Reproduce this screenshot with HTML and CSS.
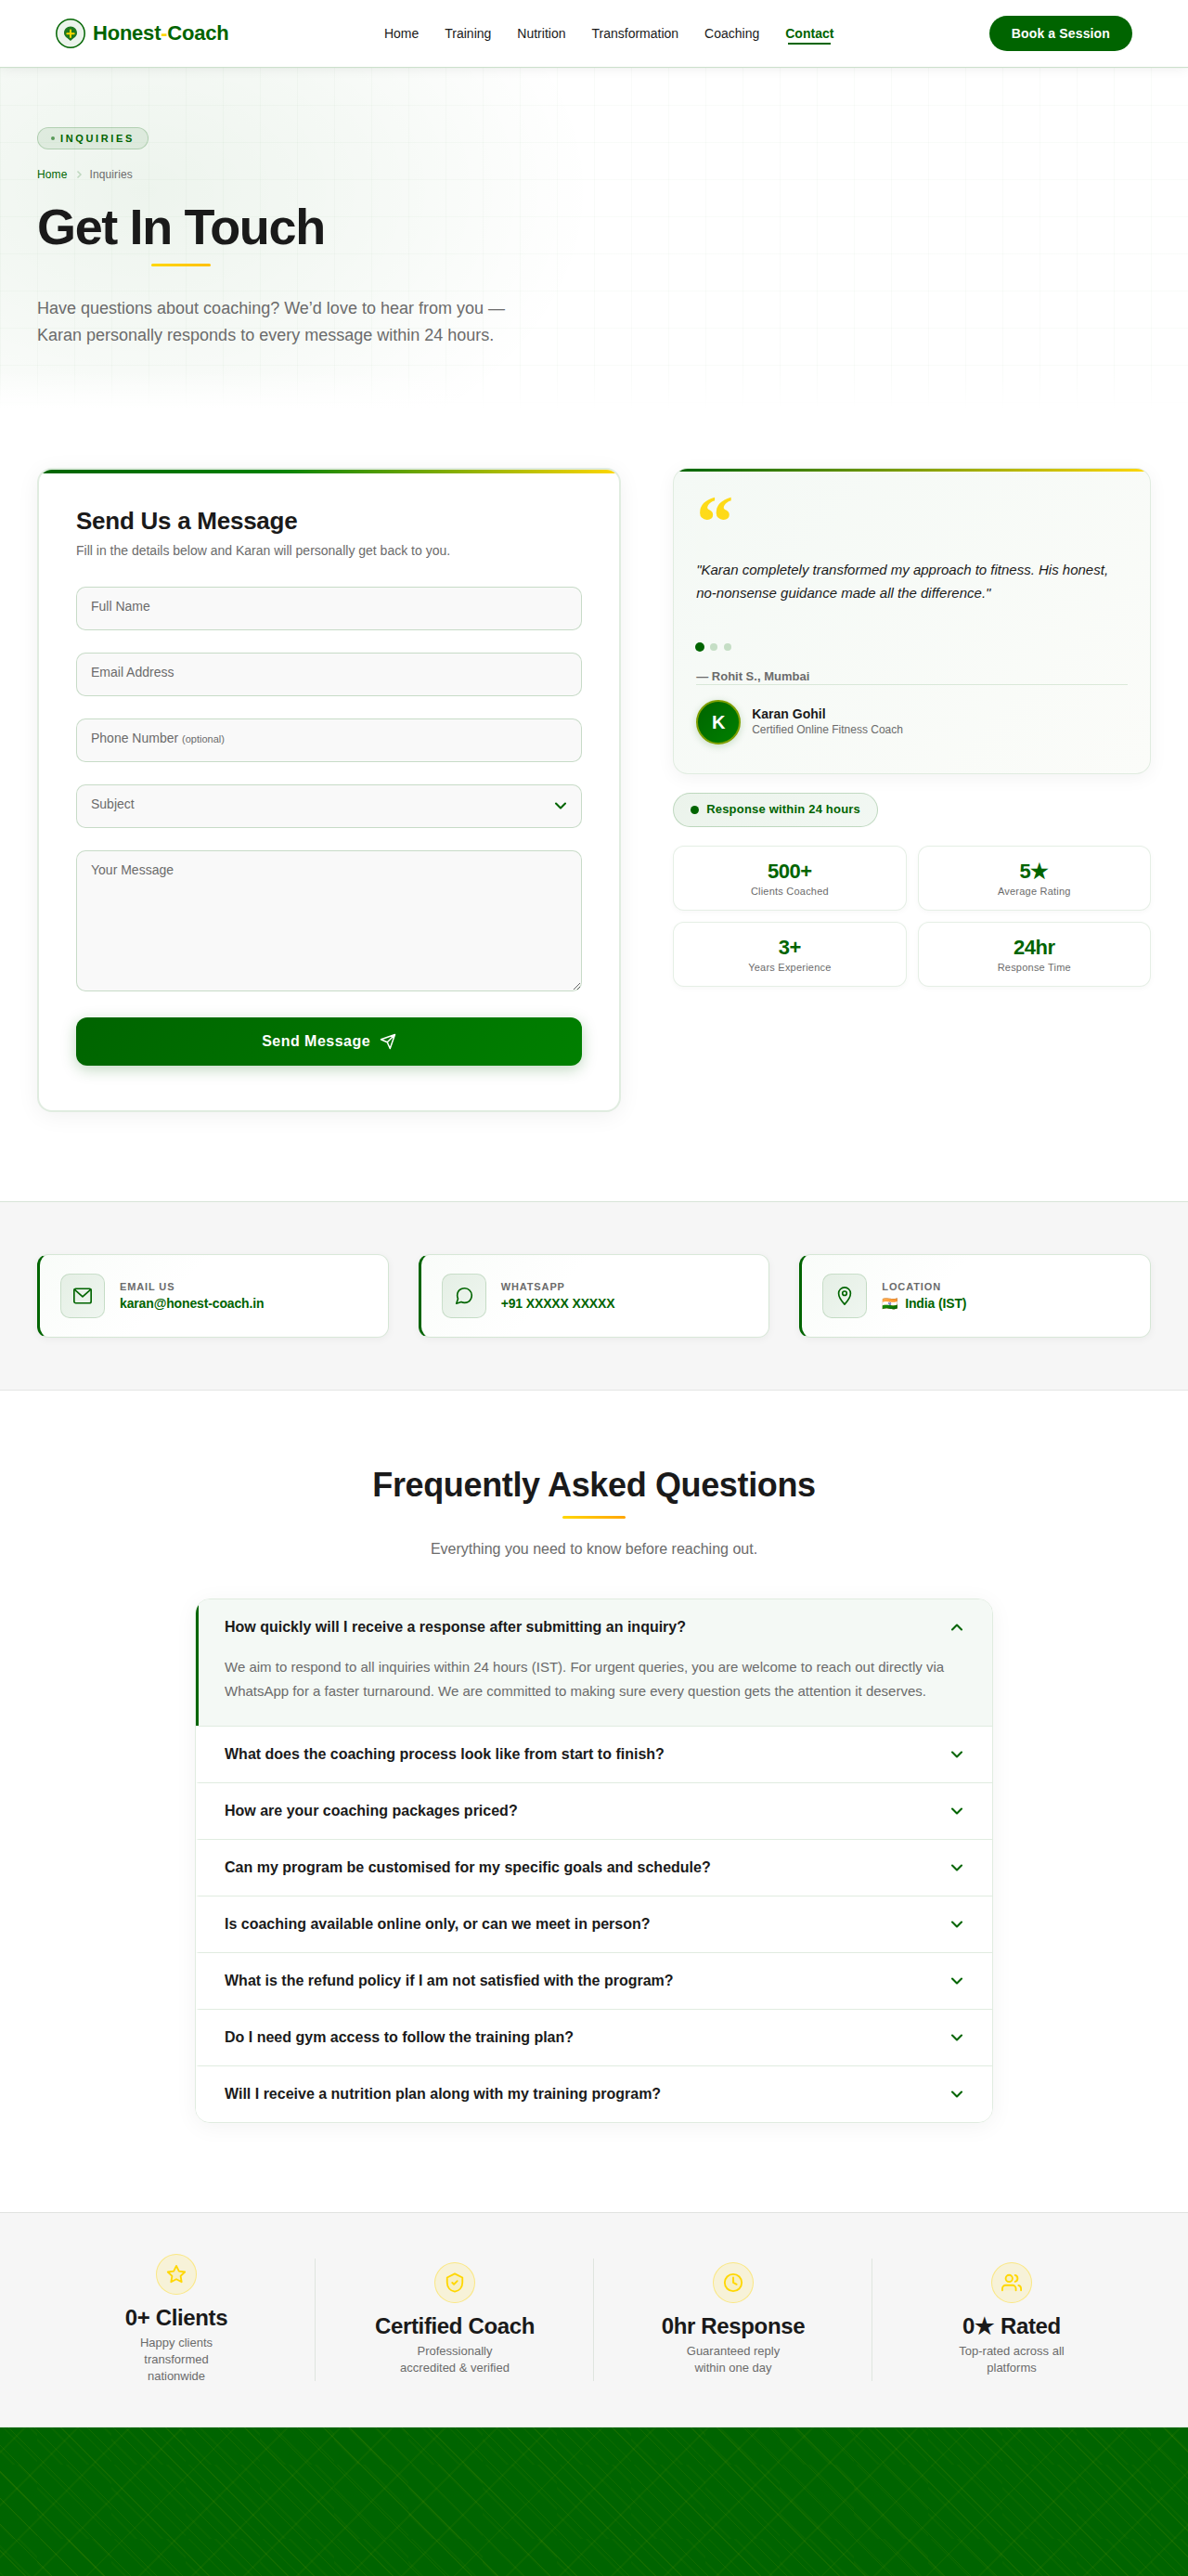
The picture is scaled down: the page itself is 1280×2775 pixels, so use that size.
FILE: index.html
```
<!DOCTYPE html>
<html lang="en">
<head>
    <meta charset="UTF-8">
    <meta name="viewport" content="width=device-width, initial-scale=1.0">
    <title>Inquiries | Honest-Coach</title>
    <link rel="stylesheet" href="styles.css">
</head>
<body>
    <header class="navbar">
        <div class="nav-inner">
            <a href="#" class="logo">
                <svg width="32" height="32" viewBox="0 0 32 32" fill="none" aria-hidden="true">
                    <circle cx="16" cy="16" r="15.2" fill="#ebf3eb" stroke="#006400" stroke-width="1.5"/>
                    <path d="M16 8.6c-4 0-7 3-7 6.8 0 4 4.2 5.6 7 8.6 2.8-3 7-4.6 7-8.6 0-3.8-3-6.8-7-6.8z" fill="#1e781e"/>
                    <path d="M16 12.500v7.500M12.300 16.200h7.400" stroke="#ffd700" stroke-width="2" stroke-linecap="round"/>
                </svg>
                <span>Honest<span class="logo-dash">-</span>Coach</span>
            </a>
            <nav class="nav-links">
                <a href="#">Home</a>
                <a href="#">Training</a>
                <a href="#">Nutrition</a>
                <a href="#">Transformation</a>
                <a href="#">Coaching</a>
                <a href="#" class="active">Contact</a>
            </nav>
            <a href="#" class="btn-session">Book a Session</a>
        </div>
    </header>

    <section class="hero">
        <div class="container">
            <span class="hero-badge">Inquiries</span>
            <nav class="breadcrumb" aria-label="Breadcrumb">
                <a href="#">Home</a>
                <svg width="12" height="12" viewBox="0 0 24 24" aria-hidden="true"><path d="M9 5l7 7-7 7"/></svg>
                <span>Inquiries</span>
            </nav>
            <h1>Get In Touch</h1>
            <p>Have questions about coaching? We’d love to hear from you — Karan personally responds to every message within 24 hours.</p>
        </div>
    </section>

    <section class="contact">
        <div class="container contact-grid">
            <form class="form-card">
                <h2>Send Us a Message</h2>
                <p class="form-sub">Fill in the details below and Karan will personally get back to you.</p>
                <div class="fields">
                    <div class="field">
                        <input type="text" id="name" name="name">
                        <label for="name">Full Name</label>
                    </div>
                    <div class="field">
                        <input type="email" id="email" name="email">
                        <label for="email">Email Address</label>
                    </div>
                    <div class="field">
                        <input type="tel" id="phone" name="phone">
                        <label for="phone">Phone Number <small>(optional)</small></label>
                    </div>
                    <div class="field">
                        <select id="subject" name="subject">
                            <option value=""></option>
                            <option value="coaching">Coaching</option>
                            <option value="training">Training</option>
                            <option value="nutrition">Nutrition</option>
                        </select>
                        <label for="subject">Subject</label>
                        <svg class="select-arrow" width="20" height="20" viewBox="0 0 24 24" aria-hidden="true"><path d="M6 9l6 6 6-6"/></svg>
                    </div>
                    <div class="field">
                        <textarea id="message" name="message"></textarea>
                        <label for="message">Your Message</label>
                    </div>
                </div>
                <button type="submit" class="btn-send">
                    Send Message
                    <svg width="18" height="18" viewBox="0 0 24 24" aria-hidden="true"><path d="M22 2L11 13M22 2l-7 20-4-9-9-4 20-7z"/></svg>
                </button>
            </form>

            <aside class="side">
                <div class="quote-card">
                    <div class="quote-mark" aria-hidden="true">“</div>
                    <blockquote>"Karan completely transformed my approach to fitness. His honest, no-nonsense guidance made all the difference."</blockquote>
                    <div class="dots">
                        <button type="button" class="dot current" aria-label="Testimonial 1"></button>
                        <button type="button" class="dot" aria-label="Testimonial 2"></button>
                        <button type="button" class="dot" aria-label="Testimonial 3"></button>
                    </div>
                    <p class="quote-author">— Rohit S., Mumbai</p>
                    <div class="coach">
                        <div class="avatar">K</div>
                        <div>
                            <p class="coach-name">Karan Gohil</p>
                            <p class="coach-role">Certified Online Fitness Coach</p>
                        </div>
                    </div>
                </div>
                <div class="response-badge">Response within 24 hours</div>
                <div class="mini-stats">
                    <div class="mini-stat"><strong>500+</strong><span>Clients Coached</span></div>
                    <div class="mini-stat"><strong>5★</strong><span>Average Rating</span></div>
                    <div class="mini-stat"><strong>3+</strong><span>Years Experience</span></div>
                    <div class="mini-stat"><strong>24hr</strong><span>Response Time</span></div>
                </div>
            </aside>
        </div>
    </section>

    <section class="info">
        <div class="container info-grid">
            <div class="info-card">
                <div class="info-icon">
                    <svg width="22" height="22" viewBox="0 0 24 24" aria-hidden="true"><rect x="2" y="3.500" width="20" height="17" rx="2"/><path d="M2.500 4.500L12 13l9.500-8.500"/></svg>
                </div>
                <div>
                    <p class="info-label">Email Us</p>
                    <a href="mailto:karan@honest-coach.in">karan@honest-coach.in</a>
                </div>
            </div>
            <div class="info-card">
                <div class="info-icon">
                    <svg width="22" height="22" viewBox="0 0 24 24" aria-hidden="true"><path d="M21 11.500a8.380 8.380 0 0 1-.9 3.800 8.500 8.500 0 0 1-7.600 4.700 8.380 8.380 0 0 1-3.800-.9L3 21l1.900-5.700a8.380 8.380 0 0 1-.9-3.800 8.500 8.500 0 0 1 4.700-7.600 8.380 8.380 0 0 1 3.800-.9h.5a8.480 8.480 0 0 1 8 8v.5z"/></svg>
                </div>
                <div>
                    <p class="info-label">WhatsApp</p>
                    <a href="#">+91 XXXXX XXXXX</a>
                </div>
            </div>
            <div class="info-card">
                <div class="info-icon">
                    <svg width="22" height="22" viewBox="0 0 24 24" aria-hidden="true"><path d="M12 22s7-7.500 7-13A7 7 0 0 0 5 9c0 5.500 7 13 7 13z"/><circle cx="12" cy="9" r="2.500"/></svg>
                </div>
                <div>
                    <p class="info-label">Location</p>
                    <p class="info-value"><span class="flag">🇮🇳</span>India (IST)</p>
                </div>
            </div>
        </div>
    </section>

    <section class="faq">
        <h2>Frequently Asked Questions</h2>
        <p class="faq-sub">Everything you need to know before reaching out.</p>
        <div class="faq-list">
            <div class="faq-item open">
                <button type="button" aria-expanded="true">How quickly will I receive a response after submitting an inquiry?
                    <svg width="20" height="20" viewBox="0 0 24 24" aria-hidden="true"><path d="M6 9l6 6 6-6"/></svg></button>
                <p>We aim to respond to all inquiries within 24 hours (IST). For urgent queries, you are welcome to reach out directly via WhatsApp for a faster turnaround. We are committed to making sure every question gets the attention it deserves.</p>
            </div>
            <div class="faq-item">
                <button type="button" aria-expanded="false">What does the coaching process look like from start to finish?
                    <svg width="20" height="20" viewBox="0 0 24 24" aria-hidden="true"><path d="M6 9l6 6 6-6"/></svg></button>
            </div>
            <div class="faq-item">
                <button type="button" aria-expanded="false">How are your coaching packages priced?
                    <svg width="20" height="20" viewBox="0 0 24 24" aria-hidden="true"><path d="M6 9l6 6 6-6"/></svg></button>
            </div>
            <div class="faq-item">
                <button type="button" aria-expanded="false">Can my program be customised for my specific goals and schedule?
                    <svg width="20" height="20" viewBox="0 0 24 24" aria-hidden="true"><path d="M6 9l6 6 6-6"/></svg></button>
            </div>
            <div class="faq-item">
                <button type="button" aria-expanded="false">Is coaching available online only, or can we meet in person?
                    <svg width="20" height="20" viewBox="0 0 24 24" aria-hidden="true"><path d="M6 9l6 6 6-6"/></svg></button>
            </div>
            <div class="faq-item">
                <button type="button" aria-expanded="false">What is the refund policy if I am not satisfied with the program?
                    <svg width="20" height="20" viewBox="0 0 24 24" aria-hidden="true"><path d="M6 9l6 6 6-6"/></svg></button>
            </div>
            <div class="faq-item">
                <button type="button" aria-expanded="false">Do I need gym access to follow the training plan?
                    <svg width="20" height="20" viewBox="0 0 24 24" aria-hidden="true"><path d="M6 9l6 6 6-6"/></svg></button>
            </div>
            <div class="faq-item">
                <button type="button" aria-expanded="false">Will I receive a nutrition plan along with my training program?
                    <svg width="20" height="20" viewBox="0 0 24 24" aria-hidden="true"><path d="M6 9l6 6 6-6"/></svg></button>
            </div>
        </div>
    </section>

    <section class="trust">
        <div class="container trust-grid">
            <div class="trust-item">
                <div class="trust-icon">
                    <svg width="22" height="22" viewBox="0 0 24 24" aria-hidden="true"><path d="M12 2l3.090 6.260L22 9.270l-5 4.870 1.180 6.880L12 17.770l-6.180 3.250L7 14.140 2 9.270l6.910-1.010L12 2z"/></svg>
                </div>
                <h3>0+ Clients</h3>
                <p>Happy clients transformed nationwide</p>
            </div>
            <div class="trust-item">
                <div class="trust-icon">
                    <svg width="22" height="22" viewBox="0 0 24 24" aria-hidden="true"><path d="M12 1.500L3 6v6c0 5.500 3.800 9.500 9 10.500 5.200-1 9-5 9-10.500V6l-9-4.500z"/><path d="M9 12l2 2 4-4"/></svg>
                </div>
                <h3>Certified Coach</h3>
                <p>Professionally accredited &amp; verified</p>
            </div>
            <div class="trust-item">
                <div class="trust-icon">
                    <svg width="22" height="22" viewBox="0 0 24 24" aria-hidden="true"><circle cx="12" cy="12" r="10"/><path d="M12 6v6l4 2"/></svg>
                </div>
                <h3>0hr Response</h3>
                <p>Guaranteed reply within one day</p>
            </div>
            <div class="trust-item">
                <div class="trust-icon">
                    <svg width="22" height="22" viewBox="0 0 24 24" aria-hidden="true"><path d="M17 21v-2a4 4 0 0 0-4-4H5a4 4 0 0 0-4 4v2"/><circle cx="9" cy="7" r="4"/><path d="M23 21v-2a4 4 0 0 0-3-3.870M16 3.130a4 4 0 0 1 0 7.750"/></svg>
                </div>
                <h3>0★ Rated</h3>
                <p>Top-rated across all platforms</p>
            </div>
        </div>
    </section>

    <section class="cta"></section>
</body>
</html>
```
FILE: styles.css
```
* {
    box-sizing: border-box;
    margin: 0;
    padding: 0;
}

:root {
    --green: #006400;
    --green-light: #008000;
    --gold: #ffd700;
    --text: #1a1a1a;
    --muted: #6b6b6b;
    --border: rgba(0, 100, 0, 0.12);
}

body {
    font-family: "Liberation Sans", Arial, sans-serif;
    color: var(--text);
    background: #fff;
    line-height: 1.6;
}

a {
    text-decoration: none;
}

button,
input,
select,
textarea {
    font-family: inherit;
}

svg {
    flex-shrink: 0;
}

.container {
    max-width: 1200px;
    margin: 0 auto;
}

/* Navbar */
.navbar {
    position: relative;
    z-index: 2;
    background: #fff;
    border-bottom: 1px solid rgba(0, 100, 0, 0.2);
    box-shadow: 0 2px 12px rgba(0, 0, 0, 0.06);
}

.nav-inner {
    display: flex;
    align-items: center;
    justify-content: space-between;
    max-width: 1200px;
    height: 72px;
    margin: 0 auto;
    padding: 0 20px;
}

.logo {
    display: flex;
    align-items: center;
    gap: 8px;
    font-size: 22px;
    font-weight: 700;
    letter-spacing: -0.01em;
    color: var(--green);
}

.logo-dash {
    color: var(--gold);
}

.nav-links {
    display: flex;
    gap: 28px;
}

.nav-links a {
    font-size: 14px;
    line-height: 22px;
    color: var(--text);
}

.nav-links .active {
    position: relative;
    font-weight: 700;
    color: var(--green);
}

.nav-links .active::after {
    content: "";
    position: absolute;
    left: 3px;
    right: 3px;
    bottom: -1px;
    height: 2px;
    background: var(--green);
}

.btn-session {
    padding: 8px 24px;
    border-radius: 20px;
    background: var(--green);
    color: #fff;
    font-size: 14px;
    line-height: 22px;
    font-weight: 700;
    letter-spacing: 0.01em;
}

/* Hero */
.hero {
    position: relative;
    padding: 64px 40px;
    background: radial-gradient(ellipse 38% 90% at 12% 36%, rgba(0, 100, 0, 0.07), rgba(0, 100, 0, 0.04) 50%, rgba(0, 100, 0, 0.01) 85%, transparent);
}

.hero::before {
    content: "";
    position: absolute;
    inset: 0;
    background-image:
        linear-gradient(rgba(0, 100, 0, 0.025) 1px, transparent 1px),
        linear-gradient(90deg, rgba(0, 100, 0, 0.025) 1px, transparent 1px);
    background-size: 40px 40px;
}

.hero::after {
    content: "";
    position: absolute;
    left: 0;
    right: 0;
    bottom: 0;
    height: 40px;
    background: linear-gradient(transparent, #fff);
}

.hero .container {
    position: relative;
    z-index: 1;
}

.hero-badge {
    display: flex;
    align-items: center;
    gap: 6px;
    width: fit-content;
    padding: 0 14px;
    border: 1px solid rgba(0, 100, 0, 0.2);
    border-radius: 12px;
    background: rgba(0, 100, 0, 0.08);
    color: var(--green);
    font-size: 11px;
    line-height: 22px;
    font-weight: 700;
    letter-spacing: 0.24em;
    text-transform: uppercase;
}

.hero-badge::before {
    content: "";
    width: 4px;
    height: 4px;
    border-radius: 50%;
    background: var(--green);
    opacity: 0.6;
}

.breadcrumb {
    display: flex;
    align-items: center;
    gap: 6px;
    margin-top: 17px;
    font-size: 12px;
    line-height: 20px;
    letter-spacing: 0.01em;
    color: var(--muted);
}

.breadcrumb a {
    color: var(--green);
}

.breadcrumb svg {
    fill: none;
    stroke: rgba(0, 100, 0, 0.2);
    stroke-width: 3;
}

.hero h1 {
    position: relative;
    width: fit-content;
    margin-top: 17px;
    font-size: 54px;
    line-height: 59px;
    letter-spacing: -0.025em;
}

.hero h1::after,
.faq h2::after {
    content: "";
    position: absolute;
    left: 50%;
    bottom: -13px;
    width: 64px;
    height: 3px;
    margin-left: -32px;
    border-radius: 2px;
    background: linear-gradient(90deg, var(--gold), #ffc000);
}

.hero p {
    max-width: 540px;
    margin-top: 44px;
    font-size: 18px;
    line-height: 29px;
    color: var(--muted);
}

/* Form */
.contact {
    padding: 64px 40px 96px;
}

.contact-grid {
    display: grid;
    grid-template-columns: 11fr 9fr;
    gap: 56px;
    align-items: start;
}

.form-card {
    position: relative;
    overflow: hidden;
    padding: 40px 40px 48px;
    border: 2px solid var(--border);
    border-radius: 16px;
    background: #fff;
    box-shadow: 0 4px 24px rgba(0, 0, 0, 0.06);
}

.form-card::before {
    content: "";
    position: absolute;
    top: 0;
    left: 0;
    right: 0;
    height: 4px;
    background: linear-gradient(90deg, var(--green), var(--green-light) 40%, var(--gold));
}

.form-card h2 {
    font-size: 26px;
    line-height: 30px;
    letter-spacing: -0.01em;
}

.form-sub {
    margin: 6px 0 28px;
    font-size: 14px;
    line-height: 22px;
    color: var(--muted);
}

.fields {
    display: grid;
    gap: 24px;
}

.field {
    position: relative;
}

.field input,
.field select,
.field textarea {
    display: block;
    width: 100%;
    height: 47px;
    padding: 14px 16px;
    border: 1px solid rgba(0, 100, 0, 0.2);
    border-radius: 10px;
    background: #f9f9f9;
    color: var(--text);
    font-size: 14px;
    appearance: none;
}

.field textarea {
    height: 152px;
    resize: vertical;
}

.field label {
    position: absolute;
    top: 11px;
    left: 16px;
    font-size: 14px;
    line-height: 20px;
    color: var(--muted);
    pointer-events: none;
}

.field small {
    font-size: 11px;
}

.select-arrow {
    position: absolute;
    top: 13px;
    right: 13px;
    pointer-events: none;
}

.select-arrow,
.faq-item svg {
    fill: none;
    stroke: var(--green);
    stroke-width: 2.5;
    stroke-linecap: round;
    stroke-linejoin: round;
}

.btn-send {
    display: flex;
    align-items: center;
    justify-content: center;
    gap: 10px;
    width: 100%;
    height: 52px;
    margin-top: 28px;
    border: none;
    border-radius: 12px;
    background: linear-gradient(135deg, var(--green), var(--green-light));
    box-shadow: 0 4px 16px rgba(0, 100, 0, 0.25);
    color: #fff;
    font-size: 16px;
    font-weight: 700;
    letter-spacing: 0.03em;
    cursor: pointer;
}

.btn-send svg {
    fill: none;
    stroke: currentColor;
    stroke-width: 2;
    stroke-linecap: round;
    stroke-linejoin: round;
}

/* Testimonial */
.quote-card {
    position: relative;
    padding: 31px 24px;
    border: 1px solid var(--border);
    border-radius: 16px;
    background: linear-gradient(135deg, #f4f9f5, #fbfcf9);
    background-clip: padding-box;
    box-shadow: 0 4px 20px rgba(0, 0, 0, 0.05);
    overflow: hidden;
}

.quote-card::before {
    content: "";
    position: absolute;
    top: 0;
    left: 0;
    right: 0;
    height: 3px;
    background: linear-gradient(90deg, var(--green), var(--gold));
}

.quote-mark {
    height: 65px;
    font-family: "Liberation Serif", serif;
    font-size: 80px;
    line-height: 52px;
    font-weight: 700;
    color: var(--gold);
    opacity: 0.9;
}

.quote-card blockquote {
    font-size: 15px;
    line-height: 25px;
    font-style: italic;
}

.dots {
    display: flex;
    gap: 7px;
    margin-top: 42px;
}

.dot {
    width: 8px;
    height: 8px;
    border: none;
    border-radius: 50%;
    background: #c5dec5;
    cursor: pointer;
}

.dot.current {
    background: var(--green);
    transform: scale(1.25);
}

.quote-author {
    margin-top: 20px;
    font-size: 13px;
    line-height: 16px;
    font-weight: 700;
    color: var(--muted);
}

.coach {
    display: flex;
    align-items: center;
    gap: 12px;
    padding-top: 16px;
    border-top: 1px solid var(--border);
}

.avatar {
    width: 48px;
    height: 48px;
    border: 2px solid #7d9f00;
    border-radius: 50%;
    background: linear-gradient(135deg, var(--green), var(--green-light));
    box-shadow: 0 2px 8px rgba(0, 100, 0, 0.2);
    color: #fff;
    font-size: 20px;
    line-height: 44px;
    font-weight: 700;
    text-align: center;
}

.coach-name {
    font-size: 14px;
    line-height: 17px;
    font-weight: 700;
}

.coach-role {
    font-size: 12px;
    line-height: 17px;
    color: var(--muted);
}

.response-badge {
    display: flex;
    align-items: center;
    gap: 8px;
    width: fit-content;
    height: 37px;
    margin: 20px 0;
    padding: 0 18px;
    border: 1px solid rgba(0, 100, 0, 0.2);
    border-radius: 20px;
    background: linear-gradient(135deg, #ebf3eb, #f2f8f3);
    color: var(--green);
    font-size: 13px;
    font-weight: 700;
    letter-spacing: 0.015em;
}

.response-badge::before {
    content: "";
    width: 9px;
    height: 9px;
    border-radius: 50%;
    background: var(--green);
}

.mini-stats {
    display: grid;
    grid-template-columns: 1fr 1fr;
    gap: 12px;
}

.mini-stat {
    padding: 14px 12px 12px;
    border: 1px solid rgba(0, 100, 0, 0.1);
    border-radius: 12px;
    background: #fff;
    box-shadow: 0 2px 6px rgba(0, 0, 0, 0.03);
    text-align: center;
}

.mini-stat strong {
    display: block;
    font-size: 22px;
    line-height: 26px;
    letter-spacing: -0.02em;
    color: var(--green);
}

.mini-stat span {
    display: block;
    font-size: 11px;
    line-height: 16px;
    letter-spacing: 0.02em;
    color: var(--muted);
}

/* Contact info */
.info {
    padding: 56px 40px;
    border-top: 1px solid var(--border);
    border-bottom: 1px solid #e4e6e4;
    background: #f6f6f6;
}

.info-grid {
    display: grid;
    grid-template-columns: repeat(3, 1fr);
    gap: 32px;
}

.info-card {
    display: flex;
    align-items: center;
    gap: 16px;
    padding: 20px 22px;
    border: 1px solid rgba(0, 100, 0, 0.15);
    border-left: 3px solid var(--green);
    border-radius: 12px;
    background: linear-gradient(135deg, #f9fcf9, #fff 40%);
    box-shadow: 0 2px 8px rgba(0, 0, 0, 0.05);
}

.info-icon {
    display: flex;
    align-items: center;
    justify-content: center;
    width: 48px;
    height: 48px;
    border: 1px solid rgba(0, 100, 0, 0.15);
    border-radius: 10px;
    background: linear-gradient(135deg, #e5efe5, #eff6f0);
}

.info-icon svg {
    fill: none;
    stroke: var(--green);
    stroke-width: 1.8;
    stroke-linecap: round;
    stroke-linejoin: round;
}

.info-label {
    font-size: 11px;
    line-height: 17px;
    font-weight: 700;
    letter-spacing: 0.08em;
    text-transform: uppercase;
    color: var(--muted);
}

.info-card a,
.info-value {
    display: block;
    font-size: 14px;
    line-height: 19px;
    font-weight: 700;
    letter-spacing: -0.01em;
    color: var(--green);
}

.flag {
    margin-right: 8px;
}

/* FAQ */
.faq {
    padding: 80px 40px 96px;
}

.faq h2 {
    position: relative;
    font-size: 36px;
    line-height: 43px;
    letter-spacing: -0.01em;
    text-align: center;
}

.faq h2::after {
    bottom: -15px;
    width: 68px;
    margin-left: -34px;
    background: linear-gradient(90deg, var(--gold), #ffa500);
}

.faq-sub {
    margin: 35px 0 40px;
    font-size: 16px;
    line-height: 26px;
    text-align: center;
    color: var(--muted);
}

.faq-list {
    max-width: 860px;
    margin: 0 auto;
    border: 1px solid var(--border);
    border-radius: 16px;
    overflow: hidden;
    box-shadow: 0 4px 24px rgba(0, 0, 0, 0.05);
}

.faq-item {
    border-left: 3px solid transparent;
    background: #fff;
}

.faq-item + .faq-item {
    border-top: 1px solid var(--border);
}

.faq-item.open {
    border-left-color: var(--green);
    background: #f4f9f5;
}

.faq-item button {
    display: flex;
    align-items: center;
    justify-content: space-between;
    width: 100%;
    height: 60px;
    padding: 0 28px;
    border: none;
    background: none;
    color: var(--text);
    font-size: 16px;
    font-weight: 700;
    text-align: left;
    cursor: pointer;
}

.faq-item.open svg {
    transform: rotate(180deg);
}

.faq-item p {
    padding: 0 28px 24px;
    font-size: 15px;
    line-height: 26px;
    color: var(--muted);
}

/* Trust strip */
.trust {
    padding: 32px 40px;
    border-top: 1px solid #e0e3e0;
    border-bottom: 1px solid #e0e8e0;
    background: #f6f6f6;
}

.trust-grid {
    display: grid;
    grid-template-columns: repeat(4, 1fr);
}

.trust-item {
    position: relative;
    display: flex;
    flex-direction: column;
    align-items: center;
    justify-content: center;
    padding: 12px 20px 13px;
    text-align: center;
}

.trust-item + .trust-item::before {
    content: "";
    position: absolute;
    top: 10%;
    left: -1px;
    width: 1px;
    height: 80%;
    background: #dfe5df;
}

.trust-icon {
    display: flex;
    align-items: center;
    justify-content: center;
    width: 44px;
    height: 44px;
    border: 1px solid rgba(255, 215, 0, 0.4);
    border-radius: 50%;
    background: rgba(255, 215, 0, 0.12);
}

.trust-icon svg {
    fill: rgba(255, 215, 0, 0.1);
    stroke: var(--gold);
    stroke-width: 2;
    stroke-linecap: round;
    stroke-linejoin: round;
}

.trust-item h3 {
    margin: 10px 0 4px;
    font-size: 24px;
    line-height: 29px;
    letter-spacing: -0.015em;
}

.trust-item p {
    max-width: 120px;
    font-size: 13px;
    line-height: 18px;
    color: var(--muted);
}

/* CTA banner */
.cta {
    min-height: 160px;
    background-color: var(--green);
    background-image:
        repeating-linear-gradient(45deg, transparent 0 19px, rgba(255, 215, 0, 0.07) 19px 20px),
        repeating-linear-gradient(-45deg, transparent 0 38px, rgba(255, 215, 0, 0.04) 38px 40px),
        repeating-linear-gradient(45deg, transparent 0 18px, rgba(255, 215, 0, 0.03) 18px 20px);
    background-size: auto, auto, 80px 80px;
    background-position: 0 0, 0 0, 40px 40px;
}
```
